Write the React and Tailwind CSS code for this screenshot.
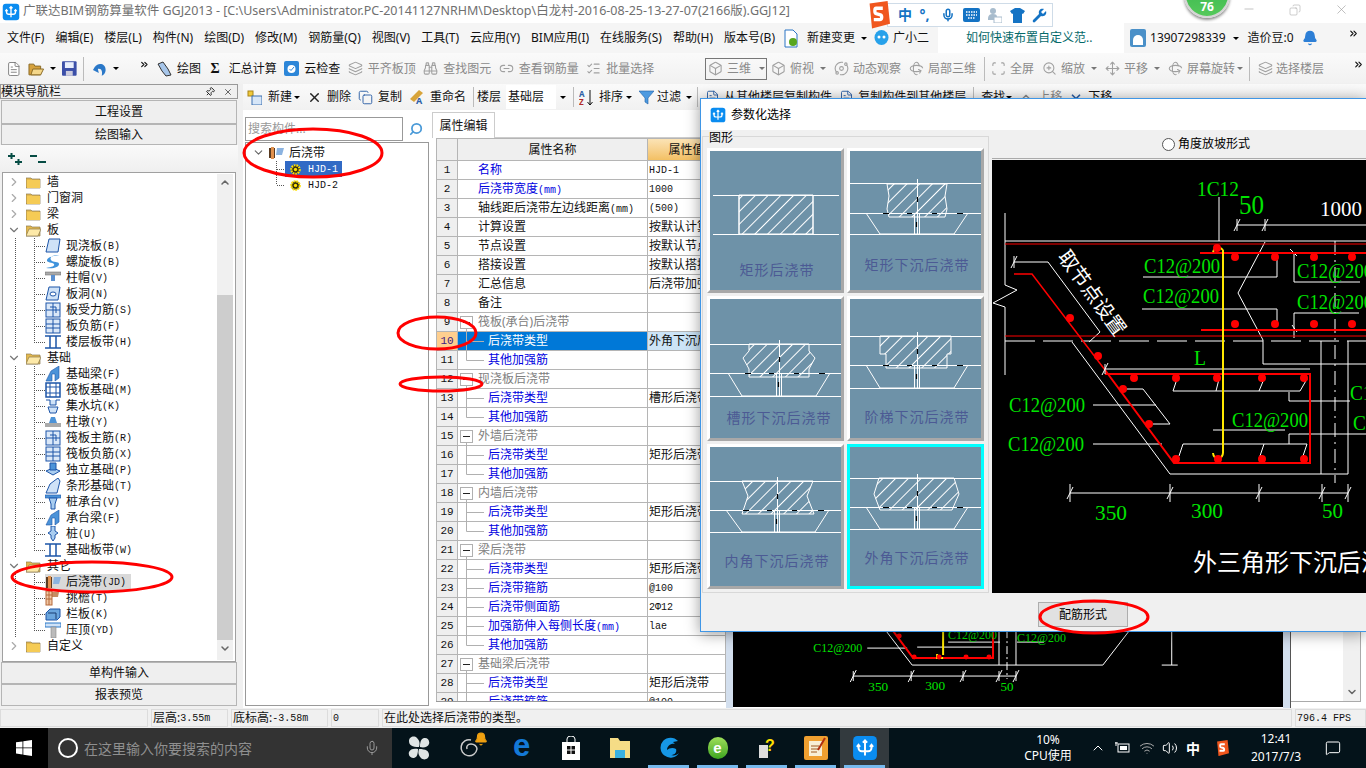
import React from 'react';
import {
  Binoculars, Box, ChevronDown, ChevronRight, ChevronUp, Copy, FileText, Layers, Link2, ListChecks,
  MessageSquare, Mic, Minus, Move, Orbit, Pin, Rotate3d, Scan, Search, Volume2, Wifi, X, ZoomIn, Bell, ChevronsRight,
} from 'lucide-react';

const Caret = ({ gray }) => (
  <span className={`w-0 h-0 border-x-[3px] border-x-transparent border-t-[3px] ${gray ? 'border-t-[#777]' : 'border-t-black'}`} />
);

const AppLogo = ({ size = 18 }) => (
  <svg width={size} height={size} viewBox="0 0 24 24">
    <rect x="1" y="1" width="22" height="22" rx="4" fill="#0a8cf0" />
    <path d="M12 5v14M6 10v2a3 3 0 0 0 3 3h6a3 3 0 0 0 3-3v-2M10 7l2-2 2 2M4.500 11 6 9l1.500 2M16.500 11 18 9l1.500 2" fill="none" stroke="#fff" strokeWidth="1.800" />
  </svg>
);

const SogouS = ({ w = 20 }) => (
  <svg width={w} height={w * 1.15} viewBox="0 0 20 23">
    <path d="M3 2 18 0l2 19-15 4z" fill="#f0561d" />
    <path d="M14 6H8.500C7 6 7 10 8.500 10.500l3.500 1c1.500.5 1.500 4-.5 4H6.500" fill="none" stroke="#fff" strokeWidth="2.800" />
  </svg>
);

const TitleBar = () => (
  <div className="h-[23px] bg-white flex items-center pl-[2px] text-[#707070] text-[12.5px] whitespace-nowrap">
    <AppLogo />
    <span className="ml-[3px]">广联达BIM钢筋算量软件 GGJ2013 - [C:\Users\Administrator.PC-20141127NRHM\Desktop\白龙村-2016-08-25-13-27-07(2166版).GGJ12]</span>
  </div>
);

const ImeBar = () => (
  <div className="absolute left-[866px] top-0 flex items-start">
    <div className="mt-[1px] relative z-10"><SogouS w={24} /></div>
    <div className="ml-[-3px] mt-[3px] w-[166px] h-[24px] bg-white border border-[#cfdce8] flex items-center pl-[10px] gap-[7.5px] text-[#1473c4]">
      <span className="font-bold text-[14px] leading-none">中</span>
      <span className="font-bold text-[14px] leading-none w-[14px]">°,</span>
      <Mic size={14} strokeWidth={2.600} />
      <svg width="17" height="14" viewBox="0 0 17 14"><rect width="17" height="14" rx="2" fill="#1473c4" /><path d="M3 4h11M3 7h11M5 10h7" stroke="#fff" strokeWidth="1.500" strokeDasharray="1.500 1" /></svg>
      <svg width="15" height="16" viewBox="0 0 15 16"><circle cx="6" cy="4" r="3" fill="#a8bccd" /><path d="M1 12c0-4 2-5 5-5s4 1 4 3v3H1z" fill="#a8bccd" /><rect x="7" y="10" width="8" height="6" fill="#fff" stroke="#a8bccd" /></svg>
      <svg width="15" height="15" viewBox="0 0 15 15"><path d="M5 0h5l5 3-2 3-1-.500V15H3V5.500L2 6 0 3z" fill="#1473c4" /></svg>
      <svg width="15" height="15" viewBox="0 0 15 15"><path d="M14 3 11 6 9 4l3-3C9 0 6 2 7 6L1 12c-1 2 1 3 2 2l6-6c4 1 6-2 5-5z" fill="#1473c4" /></svg>
    </div>
  </div>
);

const Badge = () => (
  <div className="absolute left-[1184px] top-[-28px] w-[46px] h-[46px] rounded-full bg-gradient-to-b from-[#2fb34b] to-[#55c95b] border-[2px] border-[#d5d5d5] shadow-[0_2px_3px_rgba(0,0,0,0.45)] flex items-end justify-center pb-[3px]">
    <span className="text-white font-bold text-[12px] leading-none">76</span>
  </div>
);

const WindowButtons = () => (
  <>
    <Minus className="absolute left-[1242px] top-[2px] text-[#9a9a9a]" size={14} strokeWidth={1} />
    <Copy className="absolute left-[1289px] top-[4px] text-[#9a9a9a] scale-x-[-1]" size={12} strokeWidth={1} />
    <X className="absolute left-[1334px] top-[2px] text-[#9a9a9a]" size={15} strokeWidth={1} />
  </>
);

const menus = ['文件(F)', '编辑(E)', '楼层(L)', '构件(N)', '绘图(D)', '修改(M)', '钢筋量(Q)', '视图(V)', '工具(T)', '云应用(Y)', 'BIM应用(I)', '在线服务(S)', '帮助(H)', '版本号(B)'];

const MenuBar = () => (
  <div className="h-[30px] bg-[#f5f5f5] flex items-center pl-[7px] text-[12px] text-[#111] whitespace-nowrap">
    <div className="flex gap-[11px]">
      {menus.map((m) => <span key={m}>{m}</span>)}
    </div>
    <svg className="ml-[9px]" width="14" height="19" viewBox="0 0 14 19"><path d="M1 1h8l4 4v13H1z" fill="#fff" stroke="#2b74c4" /><circle cx="9" cy="13" r="4" fill="#58a61e" /></svg>
    <span className="ml-[9px]">新建变更</span>
    <span className="ml-[6px] flex"><Caret /></span>
    <svg className="ml-[7px]" width="15" height="16" viewBox="0 0 15 16"><ellipse cx="7.500" cy="7.500" rx="7" ry="7.500" fill="#27a1ea" /><circle cx="5" cy="7" r="1.500" fill="#fff" /><circle cx="10" cy="7" r="1.500" fill="#fff" /></svg>
    <span className="ml-[4px]">广小二</span>
    <div className="ml-[9px] w-[186px] h-[30px] bg-white flex items-center pl-[28px] text-[#066a6a]">如何快速布置自定义范..</div>
    <div className="ml-[6px] w-[16px] h-[18px] rounded-[2px] bg-[#4a90c8] flex items-end justify-center"><span className="w-[10px] h-[10px] rounded-t-full bg-white mb-[2px]" /></div>
    <span className="ml-[4px] font-['Noto_Sans','Noto_Sans_CJK_SC',sans-serif]">13907298339</span>
    <span className="ml-[7px] flex"><Caret /></span>
    <span className="ml-[9px]">造价豆:0</span>
    <Bell className="ml-[8px] text-[#2d7fd6]" fill="#2d7fd6" size={16} />
    <ChevronsRight className="ml-[30px] mb-[10px] shrink-0" size={11} strokeWidth={2.500} />
  </div>
);

const Tool = ({ icon, label, gray, arrow, gap = 'gap-[5px]', arrowCls = 'ml-[-2px]' }) => (
  <div className={`flex items-center shrink-0 ${gap} ${gray ? 'text-[#8a8a8a]' : 'text-[#111]'}`}>
    {icon}
    {label && <span>{label}</span>}
    {arrow && <span className={`flex ${arrowCls}`}><Caret gray={gray} /></span>}
  </div>
);

const gi = (I) => <I size={15} className="text-[#a0a0a0] shrink-0" strokeWidth={1.700} />;

const MainToolbar = () => (
  <div className="h-[31px] flex items-center whitespace-nowrap text-[12px] bg-gradient-to-b from-[#fafafa] to-[#f1f1f1]">
    <div className="w-[150px] shrink-0 flex items-center pl-[6px] gap-[6px]">
      <FileText size={16} className="text-[#666]" fill="#fff" strokeWidth={1.200} />
      <svg width="17" height="16" viewBox="0 0 17 16"><path d="M1 3h5l1 2h6v9H1z" fill="#d6a23e" stroke="#8a6a25" /><path d="M3 14l2-6h11l-3 6z" fill="#f4d78a" stroke="#8a6a25" /></svg>
      <Caret />
      <svg width="15" height="15" viewBox="0 0 15 15"><rect width="15" height="15" rx="1" fill="#3b4fa8" /><rect x="3" y="1" width="9" height="6" fill="#e8eefc" /><rect x="4" y="10" width="7" height="5" fill="#ccd" /></svg>
      <span className="w-px h-[24px] bg-[#bbb]" />
      <svg className="ml-[2px]" width="16" height="16" viewBox="0 0 16 16"><path d="M3 6c3-5 11-4 11 3 0 3-2 5-4 6 1-4 0-8-4-7l1 4-6-3 3-5z" fill="#2a78c8" /></svg>
      <Caret />
      <ChevronsRight className="ml-[14px] mb-[8px]" size={11} strokeWidth={2.500} />
    </div>
    <div className="flex items-center gap-[7.5px] pl-[7px] w-[555px] shrink-0">
      <Tool icon={<svg width="15" height="16" viewBox="0 0 15 16"><path d="M1 3 6 1l5 7 3 6-5 1-4-5z" fill="#a7c6ea" stroke="#333" /></svg>} label="绘图" />
      <Tool gap="gap-[9px]" icon={<span className="font-bold font-['Liberation_Serif',serif] text-[14px] leading-none ml-[2px]">Σ</span>} label="汇总计算" />
      <Tool icon={<svg width="15" height="15" viewBox="0 0 15 15"><rect width="15" height="15" rx="2" fill="#2c86d8" /><circle cx="7.500" cy="8" r="4" fill="#fff" /><path d="M5.500 8 7 9.500 10 6" fill="none" stroke="#2c86d8" /></svg>} label="云检查" />
      <Tool gray icon={gi(Layers)} label="平齐板顶" />
      <Tool gray icon={gi(Binoculars)} label="查找图元" />
      <Tool gray icon={gi(Link2)} label="查看钢筋量" />
      <Tool gray icon={gi(ListChecks)} label="批量选择" />
    </div>
    <div className="flex items-center gap-[8px] text-[#8a8a8a] shrink-0">
      <div className="w-[62px] h-[22px] border border-[#777] flex items-center pl-[2px] gap-[4px] mr-[-4px]">{gi(Box)}<span>三维</span><span className="flex ml-[4px]"><Caret gray /></span></div>
      <Tool gray gap="gap-[4px]" arrowCls="ml-[2px]" icon={gi(Box)} label="俯视" arrow />
      <Tool gray gap="gap-[4px]" icon={gi(Orbit)} label="动态观察" />
      <Tool gray gap="gap-[4px]" icon={gi(Rotate3d)} label="局部三维" />
      <span className="w-px h-[24px] bg-[#bbb] mr-[-2px]" />
      <Tool gray gap="gap-[4px]" icon={gi(Scan)} label="全屏" />
      <Tool gray gap="gap-[4px]" arrowCls="ml-[2px]" icon={gi(ZoomIn)} label="缩放" arrow />
      <Tool gray gap="gap-[4px]" arrowCls="ml-[2px]" icon={gi(Move)} label="平移" arrow />
      <Tool gray gap="gap-[4px]" arrowCls="ml-[-2px]" icon={gi(Rotate3d)} label="屏幕旋转" arrow />
      <span className="w-px h-[24px] bg-[#bbb] ml-[-2px]" />
      <Tool gray gap="gap-[3px]" icon={gi(Layers)} label="选择楼层" />
    </div>
    <ChevronsRight className="ml-[29px] mb-[8px] shrink-0" size={11} strokeWidth={2.500} />
  </div>
);

const S = ({ children }) => <svg width="16" height="16" viewBox="0 0 16 16" className="shrink-0">{children}</svg>;
const B = '#1d55a8';
const treeIcons = {
  plate: <S><path d="M4 1h11l-2 13H1z" fill="#cfe2f7" stroke={B} /></S>,
  spiral: <S><path d="M15 2C9 0 4 3 6 6s8 1 8 4-5 5-13 4c6-1 9-2 8-4S1 9 2 6s7-5 13-4z" fill="#3f93dc" /></S>,
  cap: <S><rect y="2" width="16" height="3" fill="#aaa" stroke="#666" strokeWidth=".5" /><rect x="6" y="5" width="4" height="6" fill="#5a8fd0" /></S>,
  hole: <S><path d="M4 1h11l-2 13H1z" fill="#cfe2f7" stroke={B} /><ellipse cx="8" cy="8" rx="3" ry="2" fill="#fff" stroke={B} /></S>,
  gridC: <S><rect x="1" y="1" width="14" height="14" fill="#dbe8f8" stroke={B} /><path d="M8 1v14M1 8h14M5 5h6v6" fill="none" stroke={B} /></S>,
  gridH: <S><rect x="1" y="1" width="14" height="14" fill="#dbe8f8" stroke={B} /><path d="M1 6h14M1 10h14M8 1v14" fill="none" stroke={B} /></S>,
  band: <S><path d="M0 2h16M0 14h16M5 2v12M11 2v12" fill="none" stroke={B} strokeWidth="1.500" /></S>,
  beam: <S><path d="M1 15 6 5l8-5v12l-4 3V8H7v7z" fill="#4c93d8" stroke={B} strokeWidth=".6" /></S>,
  raft: <S><rect x="1" y="1" width="14" height="14" fill="#fff" stroke={B} strokeWidth="1.500" /><path d="M5 1v14M11 1v14M1 5h14M1 11h14" stroke={B} /></S>,
  pit: <S><path d="M1 2h4v5h6V2h4M3 9h10l-2 6H5z" fill="#cfe2f7" stroke={B} /></S>,
  pier: <S><path d="M6 3h4l2 6H4z" fill="#4c93d8" /><rect y="9" width="16" height="4" fill="#aaa" /></S>,
  iso: <S><path d="M1 9 8 6l7 3-7 4z" fill="#a9cdf0" stroke={B} /><path d="M5 1h6v7H5z" fill="#4c93d8" stroke={B} /></S>,
  cone: <S><path d="M1 15 5 6l8-6 2 3-3 12z" fill="#cfe2f7" stroke={B} /></S>,
  pile: <S><rect y="1" width="16" height="3" fill="#4c93d8" stroke={B} strokeWidth=".6" /><path d="M4 4h8l-2 6v5H6v-5z" fill="#a9cdf0" stroke={B} /></S>,
  spike: <S><path d="M6 0h4v5l3 2-3 2v3l-2 3-2-3V9L3 7l3-2z" fill="#a9cdf0" stroke={B} /></S>,
  post: <S><path d="M3 2h11l-1 5H3z" fill="#c58d63" /><rect x="1" y="1" width="6" height="14" fill="#f0c8a5" stroke="#b5683a" /><path d="M1 5h6M1 9h6M4 1v14" stroke="#b5683a" /></S>,
  rail: <S><path d="M1 7 5 3h10v8l-3 3H1z" fill="#6ba6dd" stroke={B} /><path d="M3 7h8v6" fill="none" stroke="#1c3f73" /></S>,
  top: <S><rect y="1" width="16" height="4" fill="#cfe2f7" stroke="#2a78c8" /><rect x="6" y="5" width="5" height="11" fill="#bbb" stroke="#888" strokeWidth=".6" /></S>,
  jd: <S><rect x="1" y="3" width="6" height="11" fill="#5a3a20" /><rect x="3" y="2" width="3" height="12" fill="#e0904d" /><path d="M9 3h7l-2 7H8z" fill="#8cb3e0" /></S>,
};

const tree = [
  { folder: '墙' }, { folder: '门窗洞' }, { folder: '梁' },
  { folder: '板', open: true, items: [['现浇板', 'B', 'plate'], ['螺旋板', 'B', 'spiral'], ['柱帽', 'V', 'cap'], ['板洞', 'N', 'hole'], ['板受力筋', 'S', 'gridC'], ['板负筋', 'F', 'gridH'], ['楼层板带', 'H', 'band']] },
  { folder: '基础', open: true, items: [['基础梁', 'F', 'beam'], ['筏板基础', 'M', 'raft'], ['集水坑', 'K', 'pit'], ['柱墩', 'Y', 'pier'], ['筏板主筋', 'R', 'gridC'], ['筏板负筋', 'X', 'gridH'], ['独立基础', 'P', 'iso'], ['条形基础', 'T', 'cone'], ['桩承台', 'V', 'pile'], ['承台梁', 'F', 'beam'], ['桩', 'U', 'spike'], ['基础板带', 'W', 'band']] },
  { folder: '其它', open: true, items: [['后浇带', 'JD', 'jd'], ['挑檐', 'T', 'post'], ['栏板', 'K', 'rail'], ['压顶', 'YD', 'top']] },
  { folder: '自定义' },
];

const Folder = ({ open }) => (
  <svg width="15" height="13" viewBox="0 0 15 13" className="shrink-0">
    <path d="M0 2h5l1 1h8v9H0z" fill="#e3b94f" stroke="#8a7a50" strokeWidth=".7" />
    {open ? <path d="M0 12 3 5h12l-3 7z" fill="#fde9a8" stroke="#8a7a50" strokeWidth=".7" /> : <rect x="1" y="4" width="13" height="8" fill="#f5cb55" />}
  </svg>
);

const ChildLines = ({ last }) => (
  <svg width="42" height="16" className="shrink-0">
    <path d={`M12 0v16M31 0v${last ? 8 : 16}M31 8h11`} stroke="#555" strokeDasharray="1 1" fill="none" shapeRendering="crispEdges" />
  </svg>
);

const TreeList = () => (
  <div className="flex-1 pt-[1px]">
    {tree.map((f) => (
      <div key={f.folder}>
        <div className="h-4 flex items-center">
          <div className="w-[23px] flex justify-center pr-[2px] text-[#777]">
            {f.open ? <ChevronDown size={14} strokeWidth={2} /> : <ChevronRight size={14} className="text-[#aaa]" strokeWidth={2} />}
          </div>
          <Folder open={f.open} />
          <span className="ml-[6px]">{f.folder}</span>
        </div>
        {f.items && f.items.map(([name, key, icon], i) => (
          <div key={name + key} className="h-4 flex items-center">
            <ChildLines last={i === f.items.length - 1} />
            <div className={`flex items-center h-4 ${name === '后浇带' ? 'bg-[#d9d9d9] pr-[5px]' : ''}`}>
              {treeIcons[icon]}
              <span className="ml-[5px]">{name}</span>
              <span className="font-['Liberation_Mono',monospace] text-[10px]">({key})</span>
            </div>
          </div>
        ))}
      </div>
    ))}
  </div>
);

const SideButton = ({ children, h }) => (
  <div className={`${h} mx-[1px] bg-[#efefef] border border-[#b5b5b5] flex items-center justify-center`}>{children}</div>
);

const LeftPanel = () => (
  <div className="w-[238px] shrink-0 flex flex-col text-[12px]">
    <div className="h-[15px] border border-[#999] flex items-center pr-[4px] leading-none">
      <span>模块导航栏</span>
      <Pin size={10} className="ml-auto rotate-45" />
      <X size={10} className="ml-[8px]" strokeWidth={1.500} />
    </div>
    <div className="h-px" />
    <SideButton h="h-[24px]">工程设置</SideButton>
    <SideButton h="h-[21px]">绘图输入</SideButton>
    <div className="h-[27px] flex items-center pl-[7px] gap-[7px] bg-gradient-to-b from-[#fafafa] to-[#efefef]">
      <svg width="16" height="14" viewBox="0 0 16 14"><path d="M1 4h7M4.500 1v6M8 10h7M11.500 7v6" stroke="#064c44" strokeWidth="2" /></svg>
      <svg width="16" height="14" viewBox="0 0 16 14"><path d="M0 4h7M8 10h8" stroke="#064c44" strokeWidth="2" /></svg>
    </div>
    <div className="flex-1 mx-[2px] border border-[#a0a0a0] bg-white flex">
      <TreeList />
      <div className="w-[16px] mr-[2px] my-[1px] bg-[#f0f0f0] flex flex-col items-center">
        <ChevronUp size={12} className="h-[17px] text-[#666]" strokeWidth={3} />
        <div className="h-[104px]" />
        <div className="w-full h-[345px] bg-[#cdcdcd]" />
        <ChevronDown size={12} className="h-[17px] text-[#666]" strokeWidth={3} />
      </div>
    </div>
    <SideButton h="h-[22px]">单构件输入</SideButton>
    <SideButton h="h-[22px]">报表预览</SideButton>
    <div className="h-[2px]" />
  </div>
);

const SecondToolbar = () => (
  <div className="h-[26px] flex items-center pl-[4px] gap-[7px] bg-gradient-to-b from-[#fafafa] to-[#f1f1f1] text-[12px] whitespace-nowrap">
    <Tool arrow arrowCls="ml-[-4px]" icon={<svg width="15" height="15" viewBox="0 0 15 15"><rect x="1" y="1" width="5" height="5" fill="#f0c93a" stroke="#a88417" /><rect x="5" y="6" width="10" height="9" fill="#d6e6f8" stroke="#3a6fb0" /></svg>} label="新建" gap="gap-[6px]" />
    <Tool icon={<X size={15} strokeWidth={2.200} className="text-[#222]" />} label="删除" />
    <Tool icon={<Copy size={15} className="text-[#2c5fa5]" strokeWidth={1.500} />} label="复制" />
    <Tool icon={<svg width="16" height="16" viewBox="0 0 16 16"><path d="M1 10 10 1l4 3-9 9z" fill="#d8a43a" /><text x="7" y="15" fontSize="9" fontWeight="700" fill="#2c5fa5">A</text></svg>} label="重命名" />
    <span className="w-px h-[20px] bg-[#bbb]" />
    <span className="ml-[-4px]">楼层</span>
    <div className="w-[50px] h-[24px] bg-white flex items-center pl-[2px] ml-[-2px]">基础层</div>
    <span className="flex ml-[-3px]"><Caret /></span>
    <span className="w-px h-[20px] bg-[#bbb]" />
    <Tool arrow icon={<svg className="ml-[-2px]" width="15" height="17" viewBox="0 0 15 17"><path d="M11 1v15M8.500 13l2.500 3 2.500-3" fill="none" stroke="#111" /><text x="0" y="8" fontSize="8" fill="#2c5fa5" fontWeight="700">A</text><text x="0" y="16" fontSize="8" fill="#b02a2a" fontWeight="700">Z</text></svg>} label="排序" />
    <Tool arrow gap="gap-[3px]" arrowCls="ml-[2px]" icon={<svg width="15" height="15" viewBox="0 0 15 15"><path d="M0 1h15L9 8v6l-3-2V8z" fill="#4d9ae0" stroke="#1f5fa6" strokeWidth=".6" /></svg>} label="过滤" />
    <span className="w-px h-[20px] bg-[#bbb] ml-[-2px]" />
    <Tool gap="gap-[4px]" icon={<FileText size={15} className="text-[#2c5fa5]" strokeWidth={1.500} />} label="从其他楼层复制构件" />
    <Tool gap="gap-[4px]" icon={<FileText size={15} className="text-[#2c5fa5]" strokeWidth={1.500} />} label="复制构件到其他楼层" />
    <span className="w-px h-[20px] bg-[#bbb]" />
    <Tool arrow gap="gap-[3px]" label="查找" />
    <Tool gray icon={<ChevronUp size={14} />} label="上移" />
    <Tool icon={<ChevronDown size={14} className="text-[#2c5fa5]" strokeWidth={3} />} label="下移" />
  </div>
);

const Gear = () => (
  <svg width="11" height="11" viewBox="0 0 13 13" className="shrink-0"><circle cx="6.500" cy="6.500" r="5" fill="#2e2a10" stroke="#ffe000" strokeWidth="2.600" strokeDasharray="2 1" /><circle cx="6.500" cy="6.500" r="2" fill="#ffe000" /></svg>
);

const HjdLines = ({ last }) => (
  <svg width="33" height="16" className="shrink-0">
    <path d={`M24.500 0v${last ? 8 : 16}M24.500 8H33`} stroke="#555" strokeDasharray="1 1" fill="none" shapeRendering="crispEdges" />
  </svg>
);

const MiddleTree = () => (
  <div className="w-[184px] ml-[2px] flex flex-col shrink-0 pb-[2px]">
    <div className="h-[32px] pt-[7px] flex items-start">
      <div className="w-[158px] h-[24px] border border-[#999] bg-white pl-[2px] text-[#999] text-[12px] leading-[21px]">搜索构件...</div>
      <Search size={14} className="ml-[6px] mt-[5px] text-[#4a9ad8] scale-x-[-1]" strokeWidth={3} />
    </div>
    <div className="flex-1 border border-[#999] bg-white pl-[6px] pt-[1px] text-[12px]">
      <div className="h-[17px] flex items-center">
        <ChevronDown size={13} className="text-[#666]" strokeWidth={2} />
        <svg className="ml-[3px]" width="16" height="12" viewBox="0 0 16 12"><rect x="1" y="1" width="6" height="10" fill="#5a3a20" /><rect x="3" width="3" height="12" fill="#e0904d" /><path d="M9 1h7l-2 7H8z" fill="#8cb3e0" /></svg>
        <span className="ml-[5px]">后浇带</span>
      </div>
      <div className="h-[16px] flex items-center">
        <HjdLines />
        <div className="flex items-center bg-[#316ac5] h-[16px] w-[57px] pl-[5px] text-white"><Gear /><span className="ml-[7px] font-['Liberation_Mono',monospace] text-[10px]">HJD-1</span></div>
      </div>
      <div className="h-[16px] flex items-center">
        <HjdLines last />
        <span className="ml-[5px] flex items-center"><Gear /><span className="ml-[7px] font-['Liberation_Mono',monospace] text-[10px]">HJD-2</span></span>
      </div>
    </div>
  </div>
);

const F = ({ children }) => <span className="font-['Liberation_Mono',monospace] text-[10px]">{children}</span>;

const rows = [
  ['名称', 'HJD-1', 'top'], ['后浇带宽度', '1000', 'top', '(mm)'], ['轴线距后浇带左边线距离', '(500)', 'topk', '(mm)'],
  ['计算设置', '按默认计算设置', 'topk'], ['节点设置', '按默认节点设置', 'topk'], ['搭接设置', '按默认搭接设置', 'topk'],
  ['汇总信息', '后浇带加强筋', 'topk'], ['备注', '', 'topk'], ['筏板(承台)后浇带', '', 'group'],
  ['后浇带类型', '外角下沉后浇带', 'child'], ['其他加强筋', '', 'end'], ['现浇板后浇带', '', 'group'],
  ['后浇带类型', '槽形后浇带', 'child'], ['其他加强筋', '', 'end'], ['外墙后浇带', '', 'group'],
  ['后浇带类型', '矩形后浇带', 'child'], ['其他加强筋', '', 'end'], ['内墙后浇带', '', 'group'],
  ['后浇带类型', '矩形后浇带', 'child'], ['其他加强筋', '', 'end'], ['梁后浇带', '', 'group'],
  ['后浇带类型', '矩形后浇带', 'child'], ['后浇带箍筋', '@100', 'child'], ['后浇带侧面筋', '2Φ12', 'child'],
  ['加强筋伸入每侧长度', 'lae', 'child', '(mm)'], ['其他加强筋', '', 'end'], ['基础梁后浇带', '', 'group'],
  ['后浇带类型', '矩形后浇带', 'child'], ['后浇带箍筋', '@100', 'child'],
];

const RowGlyph = ({ kind }) => {
  if (kind === 'group') {
    return (
      <svg width="30" height="19" className="shrink-0"><rect x="2.500" y="3.500" width="12" height="12" fill="#fff" stroke="#b0b0b0" /><path d="M5 9.500h7" stroke="#222" /><path d="M8.500 16v3" stroke="#b0b0b0" /></svg>
    );
  }
  const end = kind === 'end';
  return (
    <svg width="30" height="19" className="shrink-0"><path d={`M8.500 0v${end ? 9.500 : 19}M8.500 9.500H26`} stroke="#b0b0b0" fill="none" /></svg>
  );
};

const isLatin = (s) => /^[\wΦ@().-]+$/.test(s);

const PropTable = () => (
  <div className="w-[293px] shrink-0 flex flex-col text-[12px] ml-[4px]">
    <div className="h-[28px] pt-[2px] border-b border-[#ccc] bg-white -ml-[1px]">
      <div className="w-[63px] h-[26px] flex items-center justify-center border border-b-0 border-[#ccc] bg-white">属性编辑</div>
    </div>
    <div className="flex-1 overflow-hidden border-x border-[#b5b5b5] ml-[3px] bg-white min-h-0">
      <div className="flex h-[23px] border-y border-[#b5b5b5] bg-[#efefef]">
        <div className="w-[21px] border-r border-[#b5b5b5]" />
        <div className="w-[190px] border-r border-[#b5b5b5] flex items-center justify-center text-[#111]">属性名称</div>
        <div className="w-[77px] bg-gradient-to-b from-[#fbe3b5] to-[#f3c063] flex items-center justify-center">属性值</div>
      </div>
      {rows.map(([name, value, kind, unit], i) => {
        const n = i + 1;
        const sel = n === 10;
        const nested = kind === 'child' || kind === 'end';
        const nameColor = kind === 'group' ? 'text-[#808080]' : kind === 'topk' ? 'text-[#111]' : 'text-[#0000e0]';
        return (
          <div key={n} className="flex h-[19px] border-b border-[#b5b5b5]">
            <div className={`w-[21px] shrink-0 border-r border-[#b5b5b5] flex items-center justify-center font-['Liberation_Mono',monospace] text-[11px] ${sel ? 'bg-[#ffcf8f] text-[#402080]' : 'bg-[#efefef]'}`}>{n}</div>
            <div className={`w-[190px] shrink-0 border-r border-[#b5b5b5] flex items-center whitespace-nowrap ${sel ? 'bg-[#0078d7]' : ''}`}>
              {(kind === 'group' || nested) ? <RowGlyph kind={kind} /> : <span className="w-[20px]" />}
              <span className={`${sel ? 'text-white' : nameColor} ${kind === 'group' ? '-ml-[10px]' : ''}`}>{name}{unit && <F>{unit}</F>}</span>
            </div>
            <div className={`w-[77px] shrink-0 pl-[1px] flex items-center overflow-hidden whitespace-nowrap ${sel ? 'bg-[#cce4f7]' : ''} ${isLatin(value) ? "font-['Liberation_Mono',monospace] text-[10px]" : ''}`}>{value}</div>
          </div>
        );
      })}
    </div>
    <div className="h-[7px] border-t border-[#999] ml-[3px] shrink-0" />
  </div>
);

const GT = ({ x, y, t, w, s = 20, c = '#00e400', a = 'start' }) => (
  <text x={x} y={y} fontSize={s} fill={c} textAnchor={a} textLength={w} lengthAdjust="spacingAndGlyphs" className="font-['Liberation_Serif',serif]">{t}</text>
);

const Dot = ({ x, y, r = 4 }) => <circle cx={x} cy={y} r={r} fill="#ff0000" />;

const Tick = ({ x, y, h = 9 }) => (
  <path d={`M${x} ${y - h}v${h * 2}M${x - 3} ${y + 6}l6 -12`} stroke="#fff" fill="none" />
);

const BackCad = () => (
  <svg viewBox="733 110 550 598" className="w-full h-full block bg-black">
    <path d="M886 632 912 666H1103L1130 631M867 649H907M917 648H993M948 643H1000M999 631V666M1016 631V666M1017 643H1044M1172 632V666M1162 666H1178M853 677H1016" stroke="#fff" fill="none" />
    <path d="M1007 631V680" stroke="#fff" strokeDasharray="8 3 2 3" />
    <path d="M893 632 913 659H993V631" stroke="#ff0000" strokeWidth="2" fill="none" />
    <path d="M943 631V656M937 655V659H943" stroke="#ffe800" strokeWidth="2" fill="none" />
    <Dot x={899} y={637} r={2.500} /><Dot x={914} y={658} r={2.500} /><Dot x={939} y={658} r={2.500} /><Dot x={966} y={658} r={2.500} /><Dot x={989} y={658} r={2.500} />
    {[853, 911, 963, 999, 1016].map((x) => <Tick key={x} x={x} y={677} h={5} />)}
    <GT x={813} y={653} t="C12@200" w={49} s={13} />
    <GT x={948} y={640} t="C12@200" w={49} s={13} />
    <GT x={1017} y={643} t="C12@200" w={49} s={13} />
    <GT x={878} y={692} t="350" w={20} s={13} a="middle" />
    <GT x={935} y={691} t="300" w={20} s={13} a="middle" />
    <GT x={1007} y={692} t="50" w={13} s={13} a="middle" />
  </svg>
);

const FrontCad = () => (
  <svg viewBox="992 160 374 433" className="w-full h-full block bg-black">
    <path d="M1005 213V285L1017 290 993 303 1005 307V341M1005 341V375M1005 241H1366M1219 197V241M1237 225H1366M1265 242 1238 293 1263 340V364H1366M1321 341V474M1348 341V474M1143 277H1277V258M1142 309H1277V325M1290 249 1297 256M1294 253V282H1360M1294 338V313H1359M1292 325 1297 332M1014 262H1048L1100 332M1072 342 1170 474H1348M1105 369H1310M1173 391 1177 379M1173 391H1300L1307 379M1216 391 1219 379M1259 391 1264 379M1289 392V401H1350M1289 444V434H1366M1183 444H1307M1183 444 1179 456M1264 444 1260 456M1307 444 1303 456M1127 389H1143L1170 424H1153M1093 405H1156M1093 444H1162M1213 430H1285M1070 493H1348M1100 332 1089 342" stroke="#fff" fill="none" />
    <path d="M1005 341H1366" stroke="#fff" strokeDasharray="30 8" />
    <path d="M1335 241V483" stroke="#fff" strokeDasharray="14 5 2 5" />
    <path d="M1005 244H1366M1005 336H1366" stroke="#ff0000" />
    <path d="M1014 274H1032L1105 370" stroke="#ff0000" strokeWidth="1.500" fill="none" />
    <path d="M1200 253H1366M1201 330H1366M1105 374H1310V463H1174L1105 370" stroke="#ff0000" strokeWidth="2" fill="none" />
    <path d="M1223 250V452A5 6 0 0 1 1213 453" stroke="#ffe800" strokeWidth="2" fill="none" />
    <path d="M1213 252A6 7 0 0 1 1223 250" stroke="#ffe800" strokeWidth="2" fill="none" />
    {[[1217, 248], [1235, 257], [1275, 257], [1314, 257], [1352, 257], [1235, 324], [1275, 324], [1314, 324], [1352, 324], [1070, 318], [1098, 356], [1123, 389], [1149, 424], [1176, 459], [1134, 378], [1176, 378], [1217, 378], [1262, 378], [1304, 378], [1218, 459], [1262, 459], [1304, 459]].map(([x, y]) => <Dot key={`${x}-${y}`} x={x} y={y} />)}
    {[1070, 1170, 1259, 1322, 1348].map((x) => <Tick key={x} x={x} y={493} />)}
    <Tick x={1237} y={225} h={6} /><Tick x={1265} y={225} h={6} /><Tick x={1014} y={262} h={6} /><Tick x={1105} y={369} h={5} />
    <GT x={1197} y={196} t="1C12" w={42} s={21} />
    <GT x={1239} y={214} t="50" w={25} s={27} />
    <GT x={1320} y={216} t="1000" w={42} s={21} c="#ffffff" />
    <GT x={1144} y={273} t="C12@200" w={76} s={21} />
    <GT x={1143} y={303} t="C12@200" w={76} s={21} />
    <GT x={1297} y={278} t="C12@200" w={76} s={21} />
    <GT x={1297} y={309} t="C12@200" w={76} s={21} />
    <GT x={1009} y={412} t="C12@200" w={76} s={21} />
    <GT x={1008} y={451} t="C12@200" w={76} s={21} />
    <GT x={1232} y={427} t="C12@200" w={76} s={21} />
    <GT x={1350} y={400} t="C12" w={32} s={21} />
    <GT x={1353} y={430} t="C12" w={32} s={21} />
    <GT x={1194} y={365} t="L" w={12} s={22} />
    <GT x={1095} y={520} t="350" w={32} s={20} />
    <GT x={1191} y={518} t="300" w={32} s={20} />
    <GT x={1322} y={518} t="50" w={21} s={20} />
    <text transform="translate(1092 293) rotate(54)" textAnchor="middle" y="7" fontSize="20" fill="#fff" className="font-['Noto_Sans_CJK_SC',sans-serif]">取节点设置</text>
    <text x="1193" y="571" fontSize="24" fill="#fff" className="font-['Noto_Sans_CJK_SC',sans-serif]">外三角形下沉后浇带</text>
  </svg>
);

const thumbs = [
  { label: '矩形后浇带', lines: [44, 83], x1: 3, x2: 129, ly: 124, hatch: '29,44 103,44 103,83 29,83', extra: 'M29 44V83M103 44V83' },
  { label: '矩形下沉后浇带', lines: [32, 62, 83], ly: 119, cx: 67, top: 28, hatch: '37,33 97,33 95,45 97,58 95,66 39,66 37,58 39,45', trap: [16, 30, 104, 118] },
  { label: '槽形下沉后浇带', lines: [45, 74, 97], ly: 124, cx: 69, top: 41, hatch: '39,45 99,45 99,52 105,59 99,70 99,78 39,78 39,70 33,59 39,52', trap: [18, 32, 106, 120] },
  { label: '阶梯下沉后浇带', lines: [37, 66, 89], ly: 123, cx: 67, top: 33, hatch: '30,37 101,37 101,55 97,55 97,69 36,69 36,55 30,55', trap: [16, 30, 104, 118] },
  { label: '内角下沉后浇带', lines: [34, 63, 85], ly: 119, cx: 67, top: 30, hatch: '32,34 103,34 97,49 104,67 32,67 38,49', trap: [16, 32, 105, 119] },
  { label: '外角下沉后浇带', lines: [31, 60, 82], ly: 116, cx: 67, top: 27, hatch: '29,31 104,31 109,47 102,63 30,63 24,47', trap: [16, 30, 104, 118], selected: true },
];

const Thumb = ({ t, id }) => {
  const [, mid, bot] = t.lines;
  return (
    <div className={`border-[3px] ${t.selected ? 'border-[#00ffff]' : 'border-t-white border-l-white border-r-[#a8a8a8] border-b-[#a8a8a8]'}`}>
      <svg width="131" height="139" viewBox="0 0 131 139" className="block bg-[#6e92a8]">
        <defs>
          <pattern id={id} width="9" height="9" patternUnits="userSpaceOnUse" patternTransform="rotate(-45)">
            <path d="M0 0H9" stroke="#fff" strokeWidth="2" />
          </pattern>
        </defs>
        <polygon points={t.hatch} fill={`url(#${id})`} stroke="#fff" />
        {t.lines.map((y) => <path key={y} d={`M${t.x1 ?? 0} ${y + 0.5}H${t.x2 ?? 131}`} stroke="#fff" />)}
        {t.extra && <path d={t.extra} stroke="#fff" />}
        {t.trap && (
          <>
            <path d={`M${t.trap[0]} ${mid}L${t.trap[1]} ${bot}H${t.trap[2]}L${t.trap[3]} ${mid}`} stroke="#fff" fill="none" />
            <path d={`M${t.cx + 0.5} ${t.top}V${bot + 1}M${t.cx - 2.5} ${mid}V${bot}M${t.cx + 2.5} ${mid}V${bot}`} stroke="#fff" fill="none" />
            <path d={`M${t.cx + 0.5} ${mid - 16}v5M${t.cx - 0.5} ${mid + 9}v5M${t.trap[0] + 17} ${mid + 0.5}h6M${t.cx - 10} ${mid + 0.5}h5M${t.cx + 15} ${mid + 0.5}h5M${t.trap[3] - 11} ${mid + 0.5}h6`} stroke="#000" strokeWidth="1.200" fill="none" />
          </>
        )}
        <text x={t.cx ?? 67} y={t.ly} textAnchor="middle" fontSize="14" letterSpacing="1" fill="#4c5a94" className="font-['Noto_Sans_CJK_SC',sans-serif]">{t.label}</text>
      </svg>
    </div>
  );
};

const Dialog = () => (
  <div className="absolute left-[700px] top-[98px] w-[666px] h-[534px] bg-[#f0f0f0] border border-r-0 border-[#3f96e6] shadow-[0_2px_14px_rgba(0,0,0,0.4)] flex flex-col text-[12px] text-black">
    <div className="h-[31px] bg-white flex items-center pl-[9px] shrink-0">
      <AppLogo size={16} />
      <span className="ml-[5px]">参数化选择</span>
    </div>
    <div className="flex-1 flex min-h-0">
      <div className="w-[291px] shrink-0 relative pl-[2px]">
        <div className="absolute left-[1px] top-[6px] right-[3px] bottom-0 border border-[#d8d8d8]" />
        <span className="absolute left-[8px] top-[1px] leading-[14px] bg-[#f0f0f0]">图形</span>
        <div className="relative pt-[18px] pl-[4px] grid grid-cols-[137px_137px] gap-[3px]">
          {thumbs.map((t, i) => <Thumb key={t.label} t={t} id={`hatch${i}`} />)}
        </div>
      </div>
      <div className="flex-1 min-w-0 flex flex-col">
        <div className="h-[29px] flex items-center justify-center pl-[54px] border-b border-[#aaa] shrink-0">
          <span className="w-[13px] h-[13px] rounded-full border border-[#555] bg-white" />
          <span className="ml-[3px]">角度放坡形式</span>
        </div>
        <div className="flex-1 mt-[1px] min-h-0"><FrontCad /></div>
      </div>
    </div>
    <div className="h-[38px] shrink-0 flex items-start pt-[9px] pl-[337px]">
      <div className="w-[90px] h-[25px] bg-[#e1e1e1] border border-[#adadad] flex items-center justify-center">配筋形式</div>
    </div>
  </div>
);

const Body = () => (
  <div className="h-[624px] flex">
    <LeftPanel />
    <div className="flex-1 ml-[5px] flex flex-col min-w-0">
      <SecondToolbar />
      <div className="flex-1 flex min-h-0 bg-white">
        <MiddleTree />
        <PropTable />
        <div className="w-[7px] bg-[#d3dfee] shrink-0" />
        <div className="w-[550px] shrink-0 mb-[1px]"><BackCad /></div>
        <div className="w-[8px] bg-[#d3dfee] border-r border-[#555] shrink-0" />
        <div className="flex-1 bg-white flex">
          <div className="flex-1 border-b border-[#aaa] mb-[6px]" />
          <div className="w-[17px] bg-[#f0f0f0] border-b border-[#aaa] mb-[6px] flex items-end justify-center pb-[3px]">
            <ChevronDown size={12} strokeWidth={3} className="text-[#666]" />
          </div>
          <div className="w-[6px] border-l border-[#aaa] mb-[6px]" />
        </div>
      </div>
    </div>
  </div>
);

const StatusBar = () => (
  <div className="h-[20px] flex text-[12px] gap-[3px] pt-[1px] pb-[1px] bg-[#f0f0f0]">
    {[['w-[148px]', ''], ['w-[77px]', '层高:', '3.55m'], ['w-[97px]', '底标高:', '-3.58m'], ['w-[48px]', '', '0'], ['w-[910px]', '在此处选择后浇带的类型。'], ['flex-1', '', '796.4 FPS']].map(([w, a, b], i) => (
      <div key={i} className={`${w} border border-[#dcdcdc] flex items-center pl-[1px] whitespace-nowrap`}>
        {a}{b && <span className="font-['Liberation_Mono',monospace] text-[10px]">{b}</span>}
      </div>
    ))}
  </div>
);

const TaskIcon = ({ children, active, strip }) => (
  <div className={`w-[49px] h-[40px] shrink-0 flex items-center justify-center relative ${active ? 'bg-[#333a3e]' : ''}`}>
    {children}
    {strip && <span className="absolute left-[4px] right-[4px] bottom-0 h-[3px] bg-[#76b9ed]" />}
  </div>
);

const Taskbar = () => (
  <div className="h-[40px] bg-[#04131a] flex items-center text-white whitespace-nowrap">
    <div className="w-[48px] h-[40px] bg-black flex items-center justify-center shrink-0">
      <svg width="16" height="16" viewBox="0 0 16 16"><path d="M0 2.300 6.500 1.400V7.500H0zM7.300 1.300 16 0V7.500H7.300zM0 8.300H6.500V14.500L0 13.600zM7.300 8.300H16V16L7.300 14.700z" fill="#fff" /></svg>
    </div>
    <div className="w-[344px] h-[40px] bg-[#333] flex items-center pl-[10px] shrink-0">
      <span className="w-[20px] h-[20px] rounded-full border-[2px] border-white" />
      <span className="ml-[6px] text-[14px] text-[#8f8f8f]">在这里输入你要搜索的内容</span>
      <Mic size={16} strokeWidth={1.500} className="ml-auto mr-[12px] text-[#999]" />
    </div>
    <div className="flex ml-[7px] shrink-0">
      <TaskIcon><svg className="-ml-[9px]" width="22" height="24" viewBox="0 0 22 24"><g fill="#dfe4e4"><path d="M11 11C4 11 1 9 1 5s5-6 8-3 3 6 2 9zM11 13c7 0 10 2 10 6s-5 6-8 3-3-6-2-9zM12 11c0-7 2-9 5-9s5 3 4 6-5 4-9 3zM10 13c0 7-2 9-5 9s-5-3-4-6 5-4 9-3z" /></g></svg></TaskIcon>
      <TaskIcon><div className="relative -ml-[8px]"><svg width="22" height="22" viewBox="0 0 22 22"><path d="M13 3a8 8 0 1 0 6 9c0-3-3-5-6-5s-5 2-4 5" fill="none" stroke="#ccc" strokeWidth="1.500" /></svg><Bell size={14} className="absolute -right-[8px] -top-[5px] text-[#f0a010]" fill="#f0a010" /></div></TaskIcon>
      <TaskIcon><span className="text-[#1479d6] font-bold text-[31px] leading-none font-['Liberation_Sans',sans-serif] -mt-[6px]">e</span></TaskIcon>
      <TaskIcon><svg width="20" height="24" viewBox="0 0 20 24"><path d="M1 6h18v18H1z" fill="#fff" /><path d="M6 6V3a4 3 0 0 1 8 0v3" fill="none" stroke="#fff" /><path d="M6 10h3.500v3.500H6zM10.500 10H14v3.500h-3.500zM6 14.500h3.500V18H6zM10.500 14.500H14V18h-3.500z" fill="#111" /></svg></TaskIcon>
      <TaskIcon><svg width="22" height="22" viewBox="0 0 22 22"><path d="M1 1h8l2 3h10v17H1z" fill="#f5dc86" /><rect x="6" y="13" width="10" height="8" fill="#3ab0e0" /></svg></TaskIcon>
      <TaskIcon strip><svg width="24" height="24" viewBox="0 0 24 24"><path d="M21 5a10 10 0 1 0 1 12c-2 2-5 3-8 2 4 0 6-3 5-6-3-2-7-1-9 1 0-4 4-7 8-6l-2-2z" fill="#1697e6" /></svg></TaskIcon>
      <TaskIcon strip><div className="w-[20px] h-[22px] rounded-full bg-gradient-to-b from-[#9ee05a] to-[#3aa51e] flex items-center justify-center text-white font-bold text-[15px] font-['Liberation_Sans',sans-serif]">e</div></TaskIcon>
      <TaskIcon strip><svg width="18" height="24" viewBox="0 0 18 24"><rect x="1" y="9" width="9" height="13" fill="#ddd" /><text x="7" y="15" fontSize="16" fontWeight="700" fill="#ffe000" className="font-['Liberation_Sans',sans-serif]">?</text></svg></TaskIcon>
      <TaskIcon strip><svg width="24" height="24" viewBox="0 0 24 24"><rect width="24" height="24" rx="2" fill="#f0a030" /><path d="M5 5h13v15H5z" fill="#f8efd5" /><path d="M7 10h8M7 13h8M7 16h6" stroke="#a05a20" /><path d="M21 2 14 14" stroke="#b03010" strokeWidth="2" /></svg></TaskIcon>
      <TaskIcon active strip><AppLogo size={26} /></TaskIcon>
    </div>
    <div className="ml-auto flex items-center h-full shrink-0">
      <div className="w-[60px] flex flex-col items-center text-[12px] leading-[16px] mr-[12px]">
        <span>10%</span><span>CPU使用</span>
      </div>
      <ChevronUp size={16} className="mr-[9px]" strokeWidth={1.500} />
      <svg className="mr-[9px]" width="15" height="12" viewBox="0 0 15 12"><rect x="3" y="2" width="11" height="8" fill="none" stroke="#fff" /><rect x="5" y="4" width="7" height="4" fill="#fff" /><path d="M0 1h3M1 0v4" stroke="#fff" /></svg>
      <Wifi size={16} strokeWidth={1.500} className="mr-[7px] text-[#aaa]" />
      <Volume2 size={16} strokeWidth={1.500} className="mr-[8px]" />
      <span className="text-[14px] font-bold mr-[15px]">中</span>
      <SogouS w={14} />
      <div className="w-[60px] ml-[17px] flex flex-col items-center text-[12px] leading-[18px]">
        <span>12:41</span><span>2017/7/3</span>
      </div>
      <MessageSquare size={16} strokeWidth={1.500} className="ml-[19px] mr-[25px]" />
    </div>
  </div>
);

const Annotations = () => (
  <svg className="absolute left-0 top-0 pointer-events-none" width="1366" height="768" fill="none" stroke="#ff0000" strokeWidth="3">
    <ellipse cx="313" cy="153" rx="69" ry="24" />
    <ellipse cx="437" cy="333" rx="39" ry="16" />
    <ellipse cx="441" cy="384" rx="41" ry="7" />
    <ellipse cx="92" cy="577" rx="80" ry="15" />
    <ellipse cx="1094" cy="617" rx="54" ry="16" />
  </svg>
);

const App = () => (
  <div className="relative w-[1366px] h-[768px] overflow-hidden bg-[#f0f0f0] text-[12px] text-[#111] font-['Noto_Sans','Noto_Sans_CJK_SC',sans-serif]">
    <TitleBar />
    <MenuBar />
    <MainToolbar />
    <Body />
    <StatusBar />
    <Taskbar />
    <ImeBar />
    <Badge />
    <WindowButtons />
    <Dialog />
    <Annotations />
  </div>
);

export default App;
